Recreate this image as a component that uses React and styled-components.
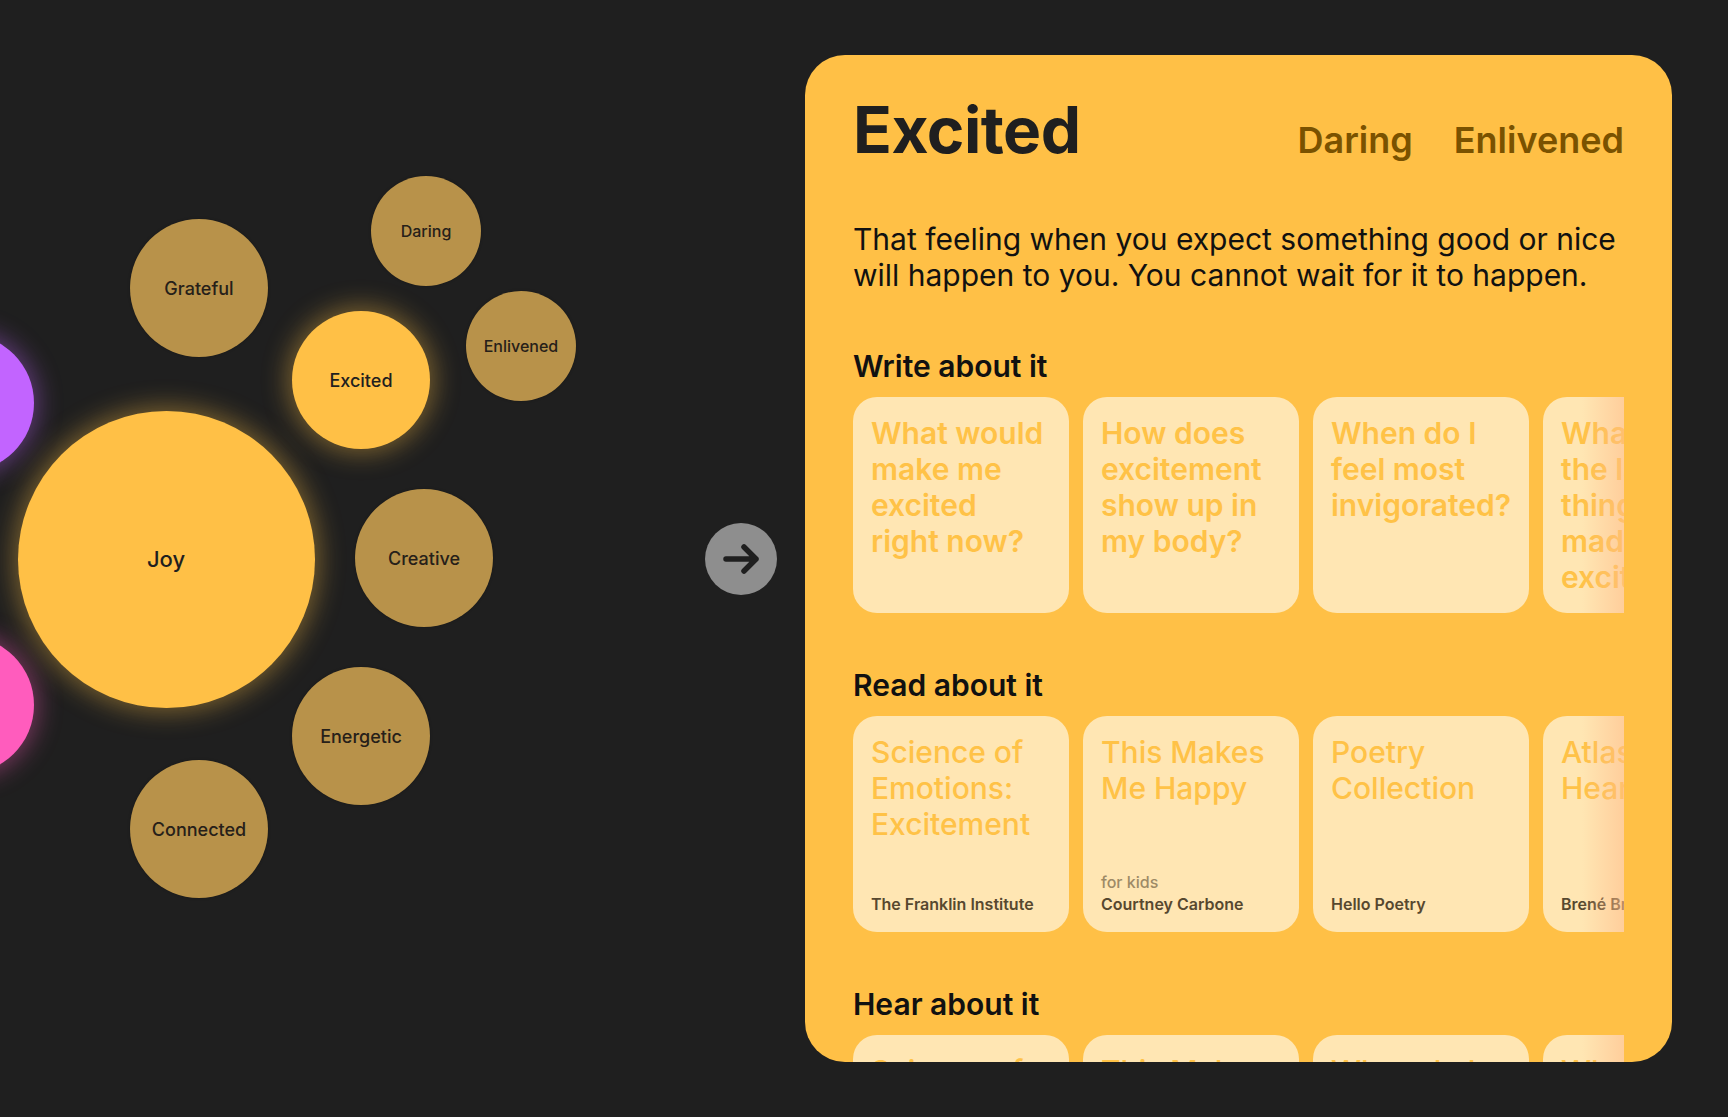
import React from "react";
import styled, { createGlobalStyle } from "styled-components";

const GlobalStyle = createGlobalStyle`
  html, body {
    margin: 0;
    padding: 0;
    background: #1f1f1f;
    font-family: Inter, "Noto Sans", sans-serif;
  }
`;

const bubbles = [
  { label: "", x: -35, y: 403, size: 138, tone: "purple" },
  { label: "", x: -35, y: 705, size: 138, tone: "pink" },
  { label: "Joy", x: 166, y: 559, size: 297, tone: "active", font: 22 },
  { label: "Grateful", x: 199, y: 288, size: 138, tone: "muted", font: 18 },
  { label: "Excited", x: 361, y: 380, size: 138, tone: "active", font: 18 },
  { label: "Daring", x: 426, y: 231, size: 110, tone: "muted", font: 16 },
  { label: "Enlivened", x: 521, y: 346, size: 110, tone: "muted", font: 16 },
  { label: "Creative", x: 424, y: 558, size: 138, tone: "muted", font: 18 },
  { label: "Energetic", x: 361, y: 736, size: 138, tone: "muted", font: 18 },
  { label: "Connected", x: 199, y: 829, size: 138, tone: "muted", font: 18 },
];

const writePrompts = [
  "What would make me excited right now?",
  "How does excitement show up in my body?",
  "When do I feel most invigorated?",
  "What was the last thing that made me excited?",
];

const readings = [
  { title: "Science of Emotions: Excitement", author: "The Franklin Institute" },
  { title: "This Makes Me Happy", note: "for kids", author: "Courtney Carbone" },
  { title: "Poetry Collection", author: "Hello Poetry" },
  { title: "Atlas of the Heart", author: "Brené Brown" },
];

const listens = [
  { title: "Science of Emotions: Excitement", author: "The Franklin Institute" },
  { title: "This Makes Me Happy", author: "Courtney Carbone" },
  { title: "When do I feel most invigorated?", author: "Hello Poetry" },
  { title: "What makes us excited?", author: "Brené Brown" },
];

const App = () => {
  return (
    <Page>
      <GlobalStyle />
      <Canvas>
        {bubbles.map((b, i) => (
          <Bubble
            key={i}
            $tone={b.tone}
            $size={b.size}
            $font={b.font}
            style={{ left: b.x - b.size / 2, top: b.y - b.size / 2 }}
          >
            {b.label}
          </Bubble>
        ))}
      </Canvas>

      <NextButton aria-label="next">
        <svg width="40" height="32" viewBox="0 0 40 32" fill="none">
          <path
            d="M5 16h30M23 4l12 12-12 12"
            stroke="#1f1f1f"
            strokeWidth="5.5"
            strokeLinecap="round"
            strokeLinejoin="round"
          />
        </svg>
      </NextButton>

      <Panel>
        <TitleRow>
          <Title>Excited</Title>
          <Related>
            <RelatedLink>Daring</RelatedLink>
            <RelatedLink>Enlivened</RelatedLink>
          </Related>
        </TitleRow>

        <Description>
          That feeling when you expect something good or nice will happen to
          you. You cannot wait for it to happen.
        </Description>

        <Section>
          <Heading>Write about it</Heading>
          <CardRow>
            {writePrompts.map((p) => (
              <Card key={p}>
                <CardTitle $weight={600}>{p}</CardTitle>
              </Card>
            ))}
            <Fade />
          </CardRow>
        </Section>

        <Section>
          <Heading>Read about it</Heading>
          <CardRow>
            {readings.map((r) => (
              <Card key={r.title}>
                <CardTitle $weight={500}>{r.title}</CardTitle>
                <Meta>
                  {r.note && <Note>{r.note}</Note>}
                  <Author>{r.author}</Author>
                </Meta>
              </Card>
            ))}
            <Fade />
          </CardRow>
        </Section>

        <Section>
          <Heading>Hear about it</Heading>
          <CardRow>
            {listens.map((r) => (
              <Card key={r.title}>
                <CardTitle $weight={500}>{r.title}</CardTitle>
                <Meta>
                  <Author>{r.author}</Author>
                </Meta>
              </Card>
            ))}
            <Fade />
          </CardRow>
        </Section>
      </Panel>
    </Page>
  );
};

const tones = {
  active: { bg: "#ffc046", color: "#1f1f1f", glow: "0 0 26px 4px rgba(255, 192, 70, 0.42)" },
  muted: { bg: "#b8924a", color: "#262019", glow: "0 0 3px rgba(0, 0, 0, 0.25)" },
  purple: { bg: "#c264ff", color: "#1f1f1f", glow: "0 0 24px 4px rgba(194, 100, 255, 0.4)" },
  pink: { bg: "#ff5cbd", color: "#1f1f1f", glow: "0 0 24px 4px rgba(255, 92, 189, 0.4)" },
};

const Page = styled.div`
  display: flex;
  align-items: center;
  height: 100vh;
  padding-right: 56px;
  box-sizing: border-box;
  overflow: hidden;
`;

const Canvas = styled.div`
  position: relative;
  flex: 1;
  align-self: stretch;
`;

const Bubble = styled.div`
  position: absolute;
  width: ${(p) => p.$size}px;
  height: ${(p) => p.$size}px;
  border-radius: 50%;
  display: flex;
  align-items: center;
  justify-content: center;
  background: ${(p) => tones[p.$tone].bg};
  color: ${(p) => tones[p.$tone].color};
  box-shadow: ${(p) => tones[p.$tone].glow};
  font-size: ${(p) => p.$font || 18}px;
  font-weight: 500;
`;

const NextButton = styled.button`
  width: 72px;
  height: 72px;
  flex-shrink: 0;
  margin-right: 28px;
  border: none;
  border-radius: 50%;
  background: #8e8e8e;
  display: flex;
  align-items: center;
  justify-content: center;
  padding: 0;
  cursor: pointer;
`;

const Panel = styled.section`
  width: 867px;
  height: 1007px;
  flex-shrink: 0;
  box-sizing: border-box;
  background: #ffc046;
  border-radius: 40px;
  padding: 39px 48px 0 48px;
  overflow: hidden;
  display: flex;
  flex-direction: column;
  gap: 54px;
`;

const TitleRow = styled.div`
  display: flex;
  justify-content: space-between;
  align-items: baseline;
  margin-bottom: 1px;
`;

const Title = styled.h1`
  margin: 0;
  font-size: 64px;
  line-height: 72px;
  font-weight: 700;
  color: #1f1f1f;
  letter-spacing: -0.5px;
`;

const Related = styled.div`
  display: flex;
  gap: 41px;
`;

const RelatedLink = styled.span`
  font-size: 36px;
  font-weight: 600;
  color: #7a5200;
`;

const Description = styled.p`
  margin: 0 0 1px;
  font-size: 30px;
  line-height: 36px;
  font-weight: 400;
  color: #111;
`;

const Section = styled.div`
  display: flex;
  flex-direction: column;
  gap: 13px;
  flex-shrink: 0;
`;

const Heading = styled.h2`
  margin: 0;
  font-size: 30px;
  line-height: 36px;
  font-weight: 600;
  color: #111;
`;

const CardRow = styled.div`
  position: relative;
  display: flex;
  gap: 14px;
  overflow: hidden;
`;

const Card = styled.div`
  flex-shrink: 0;
  width: 216px;
  height: 216px;
  box-sizing: border-box;
  padding: 18px;
  border-radius: 24px;
  background: #ffe6b3;
  display: flex;
  flex-direction: column;
  justify-content: space-between;
`;

const CardTitle = styled.div`
  font-size: 30px;
  line-height: 36px;
  font-weight: ${(p) => p.$weight};
  color: #ffc247;
`;

const Meta = styled.div`
  display: flex;
  flex-direction: column;
`;

const Note = styled.span`
  font-size: 16px;
  line-height: 23px;
  font-weight: 500;
  color: #9d8a66;
`;

const Author = styled.span`
  font-size: 16px;
  line-height: 20px;
  font-weight: 600;
  color: #57482f;
`;

const Fade = styled.div`
  position: absolute;
  top: 0;
  right: 0;
  bottom: 0;
  width: 42px;
  background: linear-gradient(to right, rgba(255, 190, 140, 0), rgba(255, 190, 140, 0.6));
  pointer-events: none;
`;

export default App;
